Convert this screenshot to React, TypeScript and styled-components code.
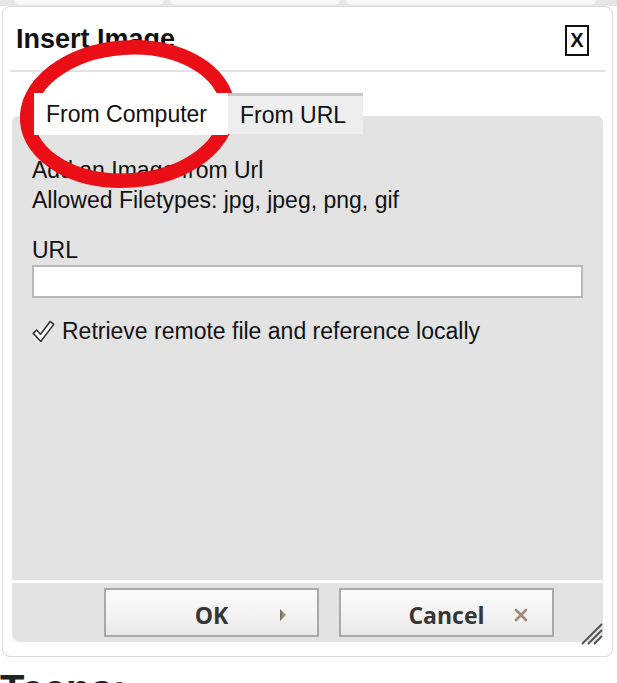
import React from "react";
import styled, { createGlobalStyle } from "styled-components";

const Global = createGlobalStyle`
  html, body { margin: 0; padding: 0; background: #ffffff; }
  body { font-family: "Liberation Sans", Arial, sans-serif; color: #111; }
  * { box-sizing: border-box; }
`;

const Page = styled.div`
  position: relative;
  width: 617px;
  height: 683px;
  overflow: hidden;
  background: #ffffff;
`;

const TopStrip = styled.div`
  height: 6px;
  display: flex;
  gap: 6px;
  padding: 0 10px 0 14px;
  background: #e6e6e6;
`;

const StripTab = styled.div<{ $w: number }>`
  width: ${(p) => p.$w}px;
  height: 5px;
  background: #f7f7f7;
  border-radius: 0 0 6px 6px;
`;

const Dialog = styled.div`
  margin-left: 2px;
  width: 611px;
  height: 651px;
  border: 1px solid #d9d9d9;
  border-radius: 8px;
  background: #ffffff;
  display: flex;
  flex-direction: column;
  padding: 0 9px 14px;
`;

const Header = styled.div`
  height: 63px;
  display: flex;
  align-items: center;
  justify-content: space-between;
  padding: 0 14px 0 4px;
`;

const Title = styled.h1`
  margin: 0;
  font-family: "Liberation Sans", Arial, sans-serif;
  font-weight: 700;
  font-size: 27px;
  line-height: 30px;
  color: #111;
`;

const CloseBox = styled.div`
  width: 24px;
  height: 31px;
  margin-top: 4px;
  border: 2px solid #111;
  display: flex;
  align-items: center;
  justify-content: center;
  font-family: "Liberation Sans", Arial, sans-serif;
  font-weight: 700;
  font-size: 20px;
  color: #111;
`;

const Separator = styled.div`
  height: 2px;
  margin: 0 -2px;
  background: #e2e2e2;
`;

const TabList = styled.div`
  margin-top: 21px;
  height: 42px;
  display: flex;
  padding-left: 22px;
  position: relative;
  z-index: 1;
`;

const Tab = styled.div<{ $active?: boolean }>`
  height: ${(p) => (p.$active ? 42 : 41)}px;
  display: flex;
  align-items: center;
  padding: 0 ${(p) => (p.$active ? 21 : 17)}px 0 12px;
  font-size: 23px;
  color: #111;
  background: ${(p) => (p.$active ? "#ffffff" : "#eeeeee")};
  border-top: ${(p) => (p.$active ? "none" : "3px solid #c9c9c9")};
`;

const Panel = styled.div`
  flex: 1;
  margin-top: -19px;
  padding: 39px 20px 0;
  background: #e3e3e3;
  border-radius: 6px 6px 0 0;
  display: flex;
  flex-direction: column;
`;

const Line = styled.div`
  font-size: 23px;
  line-height: 30px;
  color: #111;
  white-space: nowrap;
`;

const FieldLabel = styled(Line)`
  margin-top: 20px;
`;

const UrlInput = styled.input`
  display: block;
  width: 551px;
  height: 33px;
  margin: 0;
  border: 2px solid #b9b9b9;
  background: #ffffff;
  font-size: 20px;
  padding: 0 6px;
  outline: none;
`;

const CheckRow = styled.div`
  margin-top: 18px;
  display: flex;
  align-items: center;
  gap: 7px;
  font-size: 23px;
  line-height: 30px;
  color: #111;
`;

const Footer = styled.div`
  position: relative;
  margin-top: 3px;
  height: 59px;
  background: #e3e3e3;
  border-radius: 0 0 8px 8px;
  display: flex;
  align-items: center;
  justify-content: flex-end;
  gap: 20px;
  padding-right: 49px;
`;

const Button = styled.button`
  width: 215px;
  height: 49px;
  border: 2px solid #a9a9a9;
  background: linear-gradient(to bottom, #fbfbfb 0%, #f3f3f3 55%, #e9e9e9 100%);
  display: grid;
  grid-template-columns: 1fr auto 1fr;
  align-items: center;
  padding: 4px 0 0;
  font-family: "Open Sans", "DejaVu Sans", sans-serif;
  font-weight: 700;
  font-size: 23px;
  color: #363636;
`;

const ButtonLabel = styled.span`
  grid-column: 2;
`;

const ButtonIcon = styled.span<{ $pad: number }>`
  grid-column: 3;
  justify-self: end;
  padding-right: ${(p) => p.$pad}px;
  display: flex;
  align-items: center;
`;

const Grip = styled.svg`
  position: absolute;
  right: 0;
  bottom: -3px;
`;

const Annotation = styled.svg`
  position: absolute;
  left: 0;
  top: 0;
  pointer-events: none;
`;

const Below = styled.div`
  margin-top: 9px;
  font-family: "Liberation Sans", Arial, sans-serif;
  font-weight: 700;
  font-size: 40px;
  line-height: 46px;
  color: #222;
`;

const CheckIcon = () => (
  <svg width="23" height="23" viewBox="0 0 22 22">
    <circle cx="8" cy="15" r="7" fill="#ececec" />
    <path
      d="M1.2 12.8 L4.4 9.6 L8.2 13.6 L17.4 1.4 L20.8 4.2 L8.4 20.6 Z"
      fill="#fafafa"
      stroke="#333"
      strokeWidth="1.5"
      strokeLinejoin="round"
    />
  </svg>
);

const PlayIcon = () => (
  <svg width="8" height="14" viewBox="0 0 8 14">
    <defs>
      <linearGradient id="pg" x1="0" y1="0" x2="1" y2="0">
        <stop offset="0" stopColor="#7d6a58" />
        <stop offset="1" stopColor="#b9a58e" />
      </linearGradient>
    </defs>
    <path d="M1 1 L7 7 L1 13 Z" fill="url(#pg)" />
  </svg>
);

const XIcon = () => (
  <svg width="14" height="14" viewBox="0 0 14 14">
    <path
      d="M2 2 L12 12 M12 2 L2 12"
      stroke="#a08a72"
      strokeWidth="2.6"
      strokeLinecap="round"
    />
  </svg>
);

export default function App() {
  return (
    <Page>
      <Global />
      <TopStrip>
        <StripTab $w={150} />
        <StripTab $w={170} />
        <StripTab $w={250} />
      </TopStrip>
      <Dialog>
        <Header>
          <Title>Insert Image</Title>
          <CloseBox>X</CloseBox>
        </Header>
        <Separator />
        <TabList>
          <Tab $active>From Computer</Tab>
          <Tab>From URL</Tab>
        </TabList>
        <Panel>
          <Line>Add an Image from Url</Line>
          <Line>Allowed Filetypes: jpg, jpeg, png, gif</Line>
          <FieldLabel>URL</FieldLabel>
          <UrlInput type="text" />
          <CheckRow>
            <CheckIcon />
            <span>Retrieve remote file and reference locally</span>
          </CheckRow>
        </Panel>
        <Footer>
          <Button>
            <ButtonLabel>OK</ButtonLabel>
            <ButtonIcon $pad={30}>
              <PlayIcon />
            </ButtonIcon>
          </Button>
          <Button>
            <ButtonLabel>Cancel</ButtonLabel>
            <ButtonIcon $pad={24}>
              <XIcon />
            </ButtonIcon>
          </Button>
          <Grip width="24" height="24" viewBox="0 0 24 24">
            <path
              d="M3 23 L23 3 M9 23 L23 9 M15 23 L23 15"
              stroke="#555"
              strokeWidth="2"
            />
          </Grip>
        </Footer>
      </Dialog>
      <Below>Teens:</Below>
      <Annotation width="617" height="683" viewBox="0 0 617 683">
        <ellipse
          cx="127.5"
          cy="114"
          rx="100.5"
          ry="66.5"
          fill="none"
          stroke="#ea0f17"
          strokeWidth="14.5"
          transform="rotate(-4 127.5 114)"
        />
      </Annotation>
    </Page>
  );
}
